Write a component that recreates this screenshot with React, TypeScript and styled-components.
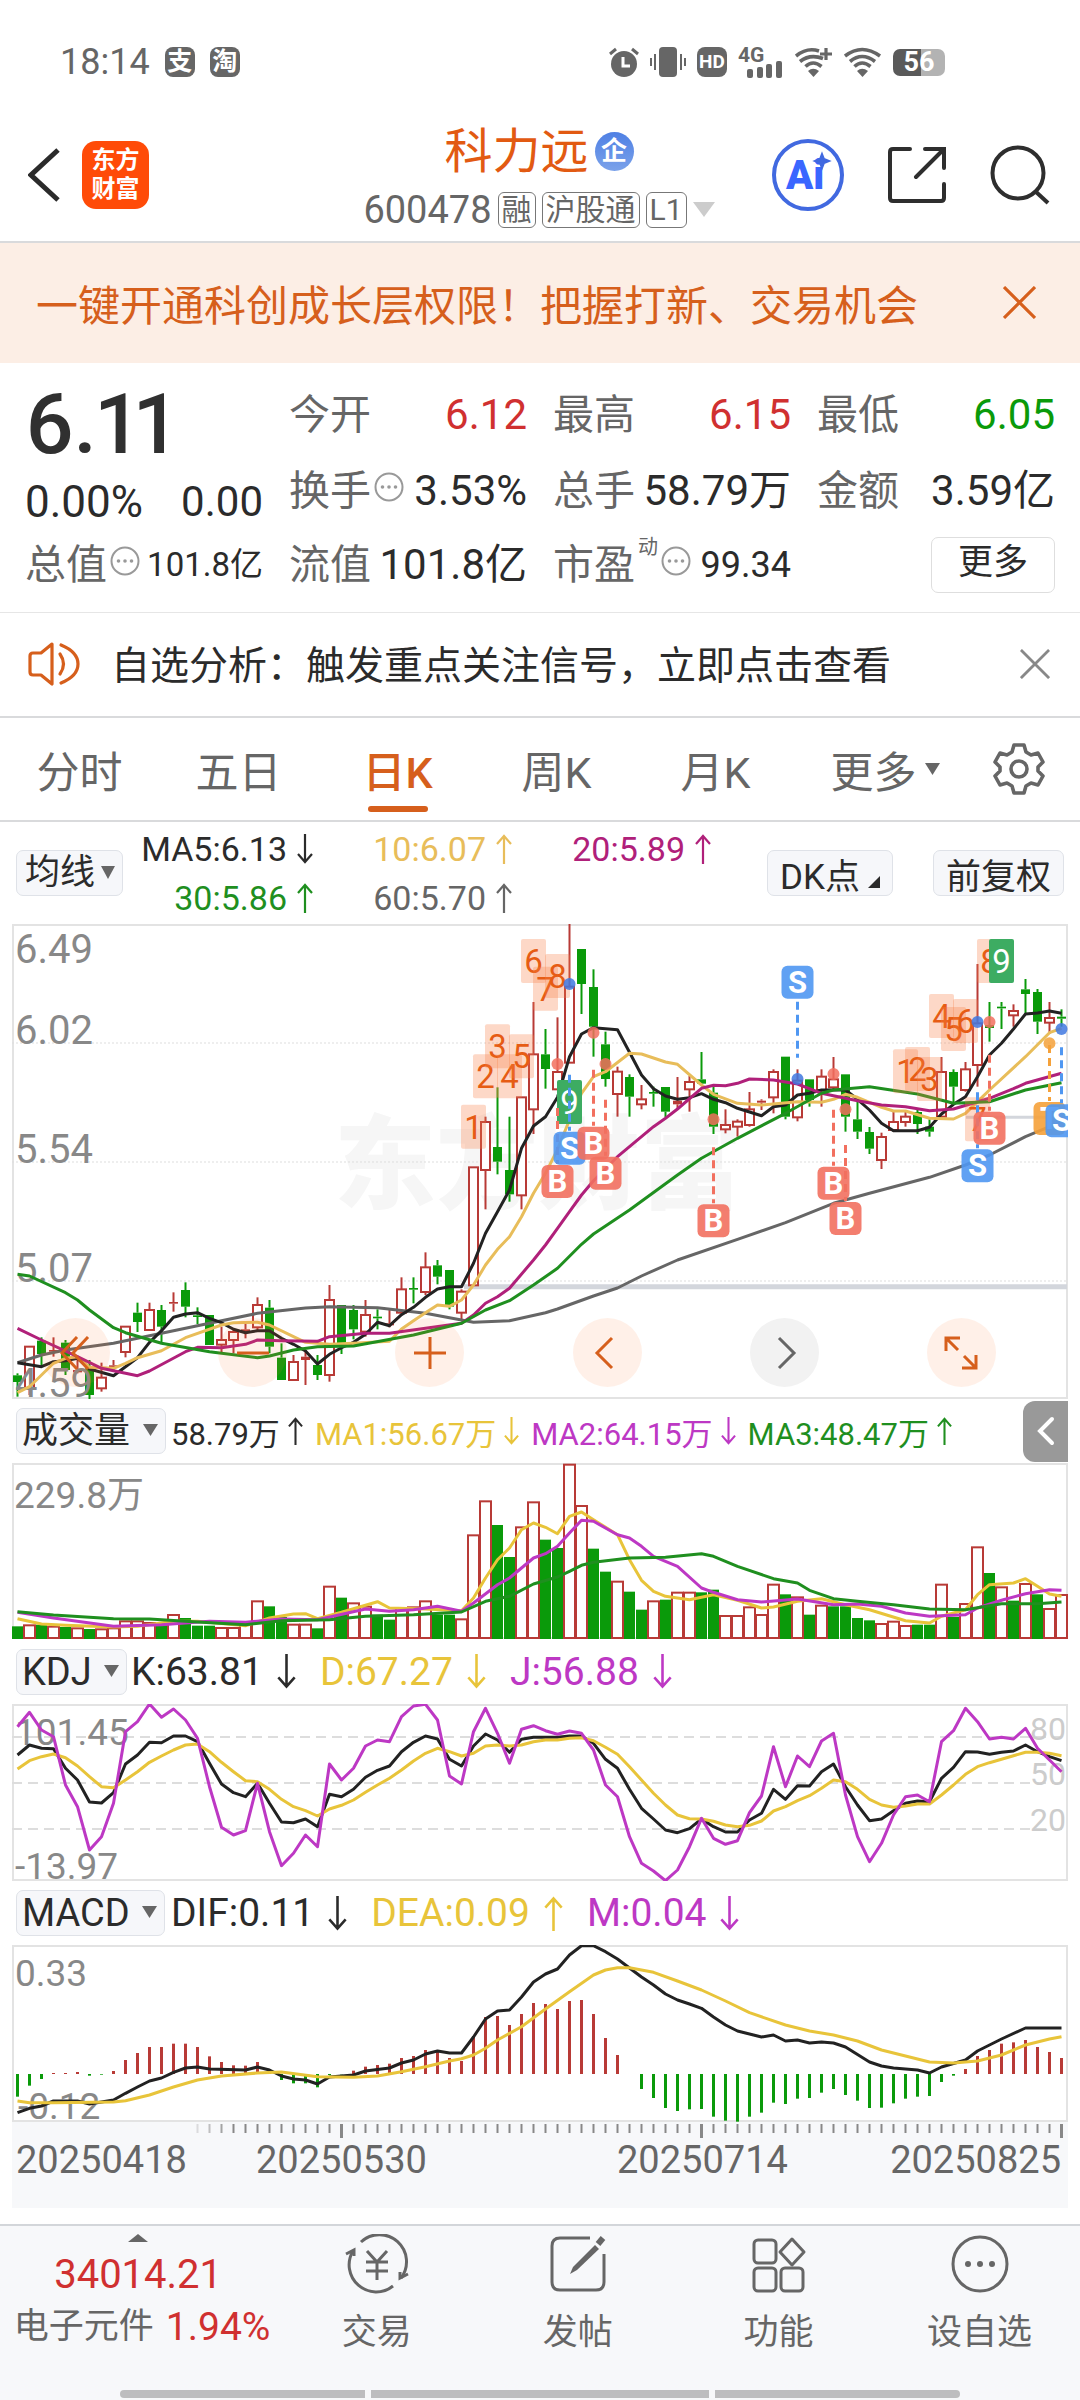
import React from "react";
import styled, { createGlobalStyle } from "styled-components";

const FONT = `Roboto, "Noto Sans CJK SC", sans-serif`;
const C = {
  ink: "#2b2b2b",
  grey: "#666666",
  soft: "#888888",
  line: "#d9dadc",
  orange: "#d65f1c",
  red: "#d03030",
  candleRed: "#b83a36",
  green: "#0a9a0a",
  maGreen: "#1f8f1f",
  gold: "#e8bd5a",
  yellow: "#e8c43a",
  magenta: "#b0207a",
  violet: "#bd38c4",
  chip: "#f6f7fa",
};

const Global = createGlobalStyle`
  *, *::before, *::after { box-sizing: border-box; }
  body { margin: 0; background: #fff; font-family: ${FONT}; color: ${C.ink}; }
  button, select { font: inherit; color: inherit; margin: 0; padding: 0; border: 0; background: none; }
  svg { display: block; flex: none; }
  p, h1 { margin: 0; font-weight: 400; }
`;

const Page = styled.div`
  display: flex;
  flex-direction: column;
  min-height: 100vh;
  white-space: nowrap;
`;

/* ---------- status bar ---------- */
const StatusBar = styled.div`
  display: flex;
  align-items: center;
  justify-content: space-between;
  height: 108px;
  padding: 16px 135px 0 60px;
  color: ${C.grey};
  font-size: 36px;
`;
const StatusGroup = styled.div<{ $gap: number }>`
  display: flex;
  align-items: center;
  gap: ${(p) => p.$gap}px;
`;
const AppDot = styled.span`
  display: grid;
  place-items: center;
  width: 30px;
  height: 30px;
  border-radius: 8px;
  background: ${C.grey};
  color: #fff;
  font-size: 25px;
  line-height: 30px;
  font-weight: 700;
`;
const HdBadge = styled(AppDot)`
  font-size: 19px;
`;
const Battery = styled.span`
  display: grid;
  place-items: center;
  width: 52px;
  height: 27px;
  border-radius: 7px;
  background: linear-gradient(90deg, #5a5a5a 54%, #b3b3b3 54%);
  color: #fff;
  font-size: 27px;
  line-height: 27px;
  font-weight: 700;
`;

/* ---------- header ---------- */
const Header = styled.header`
  display: grid;
  grid-template-columns: 1fr auto 1fr;
  align-items: center;
  height: 135px;
  padding: 0 30px 0 28px;
  border-bottom: 2px solid ${C.line};
`;
const HeaderSide = styled.div<{ $end?: boolean }>`
  display: flex;
  align-items: center;
  gap: ${(p) => (p.$end ? 44 : 22)}px;
  justify-content: ${(p) => (p.$end ? "flex-end" : "flex-start")};
`;
const Logo = styled.div`
  display: grid;
  place-content: center;
  width: 67px;
  height: 68px;
  border-radius: 14px;
  background: #ff4b08;
  color: #fff;
  font-size: 24px;
  line-height: 29px;
  font-weight: 700;
`;
const TitleCol = styled.div`
  display: flex;
  flex-direction: column;
  align-items: center;
  gap: 8px;
  padding-top: 6px;
`;
const TitleRow = styled.div`
  display: flex;
  align-items: center;
  gap: 6px;
`;
const StockName = styled.h1`
  font-size: 48px;
  line-height: 56px;
  color: #e25a12;
`;
const EntBadge = styled.span`
  display: grid;
  place-items: center;
  width: 39px;
  height: 39px;
  border-radius: 50%;
  background: linear-gradient(#4f80e4, #7ba2ea);
  color: #fff;
  font-size: 26px;
  line-height: 39px;
  font-weight: 700;
`;
const CodeRow = styled.div`
  display: flex;
  align-items: center;
  gap: 6px;
  font-size: 38px;
  line-height: 44px;
  color: ${C.grey};
`;
const Tag = styled.span`
  padding: 0 3px;
  border: 1px solid #777;
  border-radius: 6px;
  font-size: 30px;
  line-height: 34px;
`;
const IconButton = styled.button`
  display: grid;
  place-items: center;
`;

/* ---------- promo banner ---------- */
const Banner = styled.section`
  display: flex;
  align-items: center;
  justify-content: space-between;
  height: 120px;
  padding: 0 44px 2px 36px;
  background: #fceee5;
  color: ${C.orange};
  font-size: 42px;
`;

/* ---------- quote ---------- */
const Quote = styled.section`
  display: grid;
  grid-template-columns: repeat(4, minmax(0, 1fr));
  grid-template-rows: 76px 76px 72px;
  column-gap: 26px;
  align-items: center;
  padding: 14px 25px 11px;
  border-bottom: 1px solid #e6e6e6;
`;
const PriceCell = styled.div`
  display: flex;
  flex-direction: column;
  grid-row: span 2;
`;
const Price = styled.strong`
  font-size: 84px;
  line-height: 98px;
  font-weight: 500;
  font-variant-numeric: proportional-nums;
  color: #303030;
`;
const Pair = styled.div`
  display: flex;
  align-items: center;
  justify-content: space-between;
  font-size: 42px;
  line-height: 56px;
`;
const Label = styled.span`
  display: flex;
  align-items: center;
  gap: 3px;
  color: ${C.grey};
  font-size: 41px;
`;
const Sup = styled.sup`
  align-self: flex-start;
  font-size: 20px;
  line-height: 20px;
  vertical-align: baseline;
`;
const Value = styled.span<{ $color?: string; $size?: number }>`
  color: ${(p) => p.$color ?? C.ink};
  font-size: ${(p) => p.$size ?? 42}px;
`;
const InfoIcon = styled.svg`
  margin-bottom: 8px;
`;
const MoreButton = styled.button`
  justify-self: end;
  width: 124px;
  height: 56px;
  padding-bottom: 4px;
  border: 1px solid #dedede;
  border-radius: 7px;
  font-size: 35px;
  line-height: 50px;
`;

/* ---------- notice ---------- */
const Notice = styled.section`
  display: flex;
  align-items: center;
  height: 105px;
  padding: 0 30px 2px 28px;
  border-bottom: 2px solid ${C.line};
  font-size: 39px;
`;
const NoticeText = styled.p`
  flex: 1;
  padding: 0 0 4px 30px;
`;

/* ---------- tabs ---------- */
const Tabs = styled.nav`
  display: grid;
  grid-template-columns: repeat(5, 53fr) 60fr 35fr;
  height: 104px;
  border-bottom: 2px solid ${C.line};
`;
const Tab = styled.button<{ $active?: boolean }>`
  display: flex;
  align-items: center;
  justify-content: center;
  gap: 8px;
  position: relative;
  font-size: 43px;
  font-weight: ${(p) => (p.$active ? 500 : 400)};
  color: ${(p) => (p.$active ? C.orange : C.grey)};
  &::after {
    content: "";
    display: ${(p) => (p.$active ? "block" : "none")};
    position: absolute;
    bottom: 8px;
    width: 60px;
    height: 6px;
    border-radius: 3px;
    background: ${C.orange};
  }
`;
const GearTab = styled(Tab)`
  justify-content: flex-start;
  padding-left: 18px;
`;

/* ---------- indicator rows ---------- */
const MaRow = styled.div`
  display: flex;
  align-items: center;
  justify-content: space-between;
  height: 102px;
  padding: 0 16px;
`;
const MaGrid = styled.div`
  display: grid;
  grid-template-columns: 190px 199px 199px;
  grid-auto-rows: 49px;
  justify-items: end;
  flex: 1;
`;
const Reading = styled.span<{ $color: string; $size: number; $gap?: number }>`
  display: flex;
  align-items: center;
  gap: ${(p) => p.$gap ?? 10}px;
  color: ${(p) => p.$color};
  font-size: ${(p) => p.$size}px;
`;
const ChipButton = styled.button`
  display: flex;
  align-items: center;
  gap: 8px;
  height: 46px;
  padding: 0 12px;
  border: 1px solid #dfe2e8;
  border-radius: 7px;
  background: ${C.chip};
  font-size: 35px;
`;
const ChipGroup = styled.div`
  display: flex;
  gap: 40px;
`;
const SelectWrap = styled.label`
  position: relative;
  display: block;
  svg {
    position: absolute;
    right: 8px;
    top: 16px;
    pointer-events: none;
  }
`;
const Select = styled.select<{ $tight?: boolean; $size?: number }>`
  appearance: none;
  display: block;
  height: 46px;
  padding: 0 ${(p) => (p.$tight ? 26 : 34)}px 0 ${(p) => (p.$tight ? 8 : 5)}px;
  border: 1px solid #dfe2e8;
  border-radius: 7px;
  background: ${C.chip};
  font-size: ${(p) => p.$size ?? 36}px;
  line-height: 44px;
`;
const IndicatorRow = styled.div<{ $gap: number; $height: number }>`
  display: flex;
  align-items: center;
  gap: ${(p) => p.$gap}px;
  height: ${(p) => p.$height}px;
  padding-left: 16px;
  margin-right: 12px;
`;
const Readings = styled.div<{ $gap: number }>`
  display: flex;
  flex: 1;
  gap: ${(p) => p.$gap}px;
`;
const CollapseTab = styled.button`
  display: grid;
  place-items: center;
  width: 45px;
  height: 61px;
  border-radius: 12px 0 0 12px;
  background: #999;
`;

/* ---------- charts ---------- */
const Plot = styled.div`
  position: relative;
  margin: 0 12px;
`;
const ChartSvg = styled.svg`
  width: 100%;
  height: auto;
  font-family: ${FONT};
`;
const PlotControls = styled.div`
  position: absolute;
  left: 29px;
  right: 72px;
  bottom: 12px;
  display: flex;
  justify-content: space-between;
`;
const RoundButton = styled.button<{ $muted?: boolean }>`
  display: grid;
  place-items: center;
  width: 69px;
  height: 69px;
  border-radius: 50%;
  background: ${(p) => (p.$muted ? "#f2f2f2" : "rgba(255, 120, 50, 0.11)")};
  color: ${(p) => (p.$muted ? C.grey : C.orange)};
`;
const Axis = styled(Plot)`
  background: #f7f8fa;
`;

/* ---------- bottom bar ---------- */
const BottomBar = styled.footer`
  display: flex;
  flex-direction: column;
  flex: 1;
  margin-top: 16px;
  border-top: 2px solid #d3d6da;
  background: #f7f8fa;
`;
const BottomGrid = styled.div`
  display: grid;
  grid-template-columns: 11fr 8fr 8fr 8fr 8fr;
  flex: 1;
  color: ${C.grey};
`;
const NavButton = styled.button`
  display: flex;
  flex-direction: column;
  align-items: center;
  padding-top: 8px;
  gap: 14px;
  font-size: 35px;
  line-height: 50px;
`;
const IndexButton = styled(NavButton)`
  gap: 9px;
`;
const IndexValue = styled.span`
  color: ${C.red};
  font-size: 40px;
  line-height: 48px;
`;
const IndexLine = styled.span`
  display: flex;
  align-items: center;
  gap: 12px;
  padding-left: 8px;
  line-height: 38px;
  font-size: 35px;
`;
const HomeBar = styled.div`
  display: grid;
  grid-template-columns: 8fr 11fr 8fr;
  gap: 6px;
  padding: 0 120px 2px;
`;
const HomeSegment = styled.span<{ $radius: string }>`
  height: 8px;
  border-radius: ${(p) => p.$radius};
  background: #bdbdbf;
`;

/* ---------- small drawings ---------- */
const Arrow = ({ up, w = 16, h = 30 }: { up?: boolean; w?: number; h?: number }) => (
  <svg width={w} height={h} viewBox="0 0 16 30" fill="none" stroke="currentColor" strokeWidth="2.2">
    {up ? <path d="M8 30V2M1 10L8 2l7 8" /> : <path d="M8 0v28M1 20l7 8 7-8" />}
  </svg>
);
const Caret = ({ w = 15, h = 12, color = C.grey }: { w?: number; h?: number; color?: string }) => (
  <svg width={w} height={h} viewBox="0 0 15 12" preserveAspectRatio="none">
    <path d="M0 0h15L7.5 12z" fill={color} />
  </svg>
);
const Cross = ({ size, color }: { size: number; color: string }) => (
  <svg width={size} height={size} viewBox="0 0 32 32" fill="none" stroke={color} strokeWidth="3">
    <path d="M1 1l30 30M31 1L1 31" />
  </svg>
);
const Info = () => (
  <InfoIcon width="30" height="30" viewBox="0 0 30 30" fill="none" stroke="#999" strokeWidth="2">
    <circle cx="15" cy="15" r="13.5" />
    <g fill="#999" stroke="none">
      <circle cx="8.5" cy="15" r="1.8" />
      <circle cx="15" cy="15" r="1.8" />
      <circle cx="21.5" cy="15" r="1.8" />
    </g>
  </InfoIcon>
);
const Wifi = ({ plus }: { plus?: boolean }) => (
  <svg width="38" height="30" viewBox="0 0 38 30" fill="none" stroke={C.grey} strokeWidth="3.6">
    <path d={plus ? "M1 9Q12 0 24 4" : "M1 9Q18 -4 36 9"} />
    <path d={plus ? "M5 14.500Q15 6.500 28 11.500" : "M6 14.500Q18 4.500 31 14.500"} />
    <path d="M10.500 19.500Q18 12.500 26.500 19.500" />
    <path d="M13 24Q18 19.500 24 24L18.500 30z" fill={C.grey} stroke="none" />
    {plus && <path d="M31 1v12M25 7h12" strokeWidth="3.2" />}
  </svg>
);

/* ---------- chart data ---------- */
type Point = [number, number];
const STEP = 12;
const xAt = (i: number) => 5.5 + i * STEP;
const COUNT = 88;

const parse = (s: string): Point[] =>
  s.split(" ").map((p) => p.split(":").map(Number) as Point);
const toPath = (s: string, top: number) =>
  parse(s).map(([i, v]) => `${xAt(i)},${((v - top) / 3).toFixed(1)}`).join(" ");

// direction, high, body top, body bottom, low
const CANDLES = `g1390,1396,1416,1460 r1310,1310,1435,1455 g1282,1292,1332,1370 r1282,1320,1325,1340 g1290,1298,1380,1395
r1340,1380,1387,1390 g1350,1375,1455,1468 r1358,1403,1435,1445 r1350,1366,1372,1380 r1250,1250,1326,1342
g1178,1208,1236,1266 r1178,1200,1260,1260 g1185,1200,1250,1296 r1147,1176,1181,1205 g1117,1140,1190,1222
g1192,1216,1221,1242 g1215,1215,1305,1305 r1250,1290,1304,1330 r1255,1266,1290,1330 r1240,1258,1264,1285
r1162,1185,1252,1260 g1170,1193,1310,1330 g1300,1343,1410,1410 r1335,1356,1410,1410 r1320,1340,1350,1425
g1335,1365,1395,1410 r1125,1170,1395,1415 g1185,1185,1310,1332 g1185,1200,1258,1288 r1170,1215,1265,1280
g1198,1220,1225,1258 r1200,1240,1246,1252 r1102,1138,1208,1210 g1102,1134,1139,1180 r1027,1072,1146,1155
g1050,1066,1100,1123 g1080,1080,1190,1198 r1138,1145,1208,1228 r772,772,1126,1126 r620,636,780,898
g532,711,755,793 g620,780,853,875 r562,562,856,898 r276,433,598,672 g357,433,477,536
r322,486,538,540 r42,230,458,458 g117,117,222,312 g178,231,350,440 g365,403,507,530
r470,485,552,620 g493,501,560,620 r525,568,583,598 g530,546,551,590 g531,531,605,622
r501,572,583,598 r498,516,538,605 g426,508,521,521 g531,548,650,672 r598,645,658,670
r628,635,650,680 r546,598,645,650 r568,572,578,600 r478,486,562,610 g440,440,620,628
r478,512,622,634 g508,508,570,590 r478,500,540,590 r441,508,532,540 g493,493,620,665
g575,628,665,687 g651,666,716,732 r668,681,750,777 r605,636,660,665 r600,620,636,650
g598,606,642,672 g628,650,665,680 r441,486,620,622 g478,486,530,582 r456,478,540,545
r162,340,465,530 g276,345,354,395 g276,290,295,357 r283,303,316,350 g207,238,252,310
g237,246,335,372 r276,324,338,372 g298,320,326,350`
  .split(/\s+/)
  .map((t) => ({ up: t[0] === "r", v: t.slice(1).split(",").map(Number) }));

const MA5 =
  "0:1358 2:1370 3:1355 4:1352 5:1345 6:1377 8:1397 9:1370 10:1343 11:1297 12:1262 13:1222 14:1212 15:1208 16:1225 17:1238 18:1258 19:1268 20:1262 21:1262 22:1285 23:1303 24:1323 25:1362 26:1333 27:1313 28:1297 29:1273 30:1237 31:1247 32:1214 33:1192 34:1162 35:1137 36:1130 37:1130 38:1060 39:970 40:905 41:840 42:715 43:648 44:620 45:562 46:440 47:372 48:353 50:359 51:427 52:495 53:536 54:558 55:568 56:563 57:551 58:568 59:578 60:595 62:617 63:590 64:585 65:555 66:550 67:540 69:540 70:568 71:600 72:640 73:662 75:662 76:652 77:612 78:583 79:560 80:500 81:435 82:400 83:357 84:312 85:309 86:303 87:310";
const MA10 =
  "0:1448 1:1430 2:1395 3:1360 4:1345 5:1340 6:1372 8:1375 9:1360 10:1343 12:1322 14:1283 17:1245 18:1238 20:1237 21:1245 23:1280 24:1297 26:1303 28:1300 31:1294 32:1257 33:1232 34:1208 35:1185 36:1189 37:1170 38:1125 39:1065 40:1018 41:980 42:920 43:850 44:790 45:718 46:630 47:550 48:500 49:485 51:430 52:432 54:456 55:463 57:525 58:553 60:580 62:585 65:575 67:577 68:568 69:553 70:562 72:592 73:603 74:603 76:625 78:627 79:610 80:575 81:540 84:440 86:368 87:355";
const MA20 =
  "0:1255 2:1290 5:1340 7:1375 10:1397 11:1383 14:1325 15:1312 17:1313 19:1303 20:1290 22:1292 25:1294 26:1280 29:1270 31:1270 34:1255 37:1240 38:1215 39:1180 40:1160 41:1135 43:1050 44:1005 45:955 46:905 47:855 48:812 50:740 53:650 54:625 55:597 57:535 58:526 59:527 60:520 61:507 63:510 65:522 67:550 70:572 72:585 74:590 76:602 78:597 81:565 83:536 84:520 87:490";
const MA30 =
  "0:1093 1:1098 4:1148 5:1170 6:1200 8:1253 9:1268 12:1300 16:1325 20:1343 21:1338 23:1320 25:1310 28:1308 33:1275 37:1240 39:1200 41:1172 43:1125 45:1075 47:1003 48:972 51:900 55:795 57:745 60:685 64:610 67:550 68:540 71:530 75:552 78:580 81:575 84:540 87:518";
const MA60 =
  "0:1358 2:1335 4:1320 8:1300 12:1270 16:1240 20:1210 24:1194 26:1190 30:1193 34:1210 38:1237 41:1232 44:1208 45:1197 48:1158 50:1134 52:1098 55:1050 60:988 64:938 68:880 71:850 76:802 79:765 81:735 84:680 87:635";

// index, box top, digit
const NINE_TURNS: [number, number, string][] = [
  [38, 584, "1"], [39, 433, "2"], [40, 343, "3"], [41, 433, "4"], [42, 373, "5"], [43, 87, "6"],
  [44, 170, "7"], [45, 132, "8"], [46, 510, "9"], [74, 418, "1"], [75, 411, "2"], [76, 441, "3"],
  [77, 252, "4"], [78, 291, "5"], [79, 267, "6"], [80, 562, "7"], [81, 87, "8"], [82, 87, "9"],
];
// index, dot y, badge top, letter
const SIGNALS: [number, number, number, "B" | "S" | "T"][] = [
  [45, 462, 765, "B"], [46, 222, 665, "S"], [48, 368, 650, "B"], [49, 462, 740, "B"],
  [58, 628, 883, "B"], [65, 507, 167, "S"], [68, 492, 770, "B"], [69, 598, 876, "B"],
  [80, 336, 718, "S"], [81, 336, 605, "B"], [86, 400, 576, "T"], [87, 357, 583, "S"],
];
const SIGNAL_COLOR = { B: "#f2705f", S: "#4f97f2", T: "#f5a13a" };

const VOLUMES =
  "g710 r704 g705 r708 g712 r713 g718 r716 r713 r692 r692 r697 g700 r673 g685 g708 g708 r712 r712 r700 r632 g650 g682 r702 r702 g716 r588 g624 r638 r648 g675 g690 r652 r650 r632 g675 g675 r686 r434 r332 g406 g502 r410 r335 g450 g475 r222 r346 g477 g546 r573 g606 g660 r632 g630 r606 r606 g608 g600 r676 r676 r650 r673 r582 g614 r620 g675 r645 g650 g650 g685 g692 r700 r693 r706 g705 g705 r582 g682 r640 r470 g550 r590 g633 r580 g614 r655 r613".split(" ");
const VMA1 =
  "0:687 2:703 4:707 8:712 10:710 13:695 15:695 19:708 21:685 23:673 24:672 25:687 27:668 30:636 31:655 34:658 37:663 38:625 39:565 40:510 41:475 42:420 43:400 44:413 45:432 46:380 47:367 48:390 50:435 51:510 52:572 53:605 54:620 56:630 58:615 60:632 62:655 63:652 65:635 67:627 69:645 71:660 74:693 76:700 77:680 79:660 80:615 81:585 83:580 84:567 85:590 86:613 87:620";
const VMA2 =
  "0:668 3:685 8:710 12:705 16:695 19:698 22:688 25:690 29:658 31:665 33:660 35:650 37:665 38:640 40:585 41:565 43:505 44:492 45:470 46:430 47:392 48:395 50:435 51:445 52:470 53:500 55:530 57:595 58:608 60:630 62:637 65:628 68:645 70:643 72:650 74:670 76:680 79:675 80:655 82:632 84:612 86:600 87:602";
const VMA3 =
  "0:666 3:676 8:687 11:688 15:697 19:705 22:693 26:690 29:680 33:675 37:667 39:635 41:620 43:583 45:562 46:545 47:527 48:518 51:505 54:503 57:492 58:500 60:530 63:567 65:580 66:602 68:627 70:635 73:645 76:658 79:660 82:642 85:642 87:637";

const indexed = (s: string) => s.split(" ").map((v, i) => `${i}:${v}`).join(" ");
const KDJ_J = indexed(
  "110 67 120 140 285 350 480 440 340 125 95 42 82 57 90 145 290 412 435 422 280 425 527 490 435 470 222 270 235 168 150 155 80 48 43 90 258 282 125 55 130 220 118 107 122 133 123 130 180 285 320 440 520 543 572 540 470 385 445 463 452 368 318 170 290 198 230 153 130 315 440 515 460 375 320 315 335 155 122 55 95 147 142 147 115 175 210 245"
);
const KDJ_K = indexed(
  "195 165 175 176 235 270 336 339 308 222 195 157 158 138 138 155 220 282 308 320 280 340 396 398 387 410 313 320 298 262 241 228 185 157 138 147 208 228 168 132 150 187 148 142 142 142 138 138 160 208 235 298 355 387 420 428 416 387 410 426 426 390 370 298 328 287 288 245 222 290 345 392 387 362 340 333 335 265 232 185 186 193 187 183 165 185 200 212"
);
const KDJ_D = indexed(
  "237 212 200 192 203 228 260 290 293 270 245 217 198 180 165 162 185 217 245 272 275 298 328 350 362 378 357 346 330 307 285 265 240 213 190 175 185 198 190 168 165 168 165 155 150 150 145 143 152 172 193 230 270 310 345 375 386 387 394 405 410 406 393 363 350 332 317 295 270 275 298 328 345 352 348 342 342 315 285 253 230 218 208 197 187 187 190 197"
);

const MACD_BARS =
  "650 617 597 579 579 576 587 584 573 540 519 501 501 491 491 501 529 546 556 557 546 570 600 610 610 622 585 583 572 560 555 551 534 528 510 510 534 543 471 411 408 435 402 369 372 387 363 360 402 474 525 582 627 654 684 693 688 687 710 722 725 710 698 668 672 656 654 638 627 645 662 684 683 670 656 650 648 606 587 567 528 510 491 487 480 501 516 534"
    .split(" ")
    .map(Number);
const DIF =
  "0:698 1:685 2:678 3:663 5:663 6:672 8:660 9:640 10:621 11:603 12:594 13:577 14:564 15:561 16:567 19:570 20:561 21:570 22:588 23:597 24:600 25:612 26:591 28:585 29:573 31:564 32:549 33:540 34:522 35:513 36:519 37:519 38:471 39:417 40:393 41:390 42:351 43:306 44:282 45:267 46:225 47:197 48:197 49:215 50:237 51:264 52:291 53:315 54:342 55:360 56:372 57:385 58:411 59:435 60:453 61:462 62:471 63:465 64:483 65:480 66:489 67:486 68:489 69:501 71:546 72:558 73:564 75:570 76:579 77:561 79:540 80:513 81:495 82:477 84:444 87:444";
const DEA =
  "0:663 1:668 3:668 8:666 9:662 11:645 13:621 15:600 17:588 20:579 22:576 25:590 28:592 30:588 32:575 34:560 36:543 37:536 38:525 39:505 40:480 42:440 44:387 46:335 48:285 49:270 50:263 51:263 53:277 55:303 57:330 59:363 61:398 64:435 66:453 68:465 70:483 72:510 74:528 76:546 78:549 80:543 82:525 84:495 86:477 87:470";

const Line = ({ data, top, color }: { data: string; top: number; color: string }) => (
  <polyline points={toPath(data, top)} fill="none" stroke={color} strokeWidth="3" strokeLinejoin="round" />
);
const Frame = ({ h }: { h: number }) => (
  <rect x="1" y="1" width="1054" height={h - 2} fill="none" stroke="#e3e3e3" strokeWidth="2" />
);

function KLineChart() {
  const y = (v: number) => (v - 42) / 3;
  return (
    <ChartSvg viewBox="0 0 1056 475" role="img" aria-label="日K">
      <text x="322" y="277" fontSize="102" fontWeight="900" fill="#f6f6f6">东方财富</text>
      <Frame h={475} />
      {[119, 238, 357].map((g) => (
        <line key={g} x1="0" x2="1056" y1={g} y2={g} stroke="#ddd" strokeDasharray="2 2" />
      ))}
      <line x1="452" x2="1055" y1={y(1130)} y2={y(1130)} stroke="#d3d6dc" strokeWidth="5" />
      <line x1="954" x2="1050" y1={y(622)} y2={y(622)} stroke="#d3d6dc" strokeWidth="3" />
      {CANDLES.map(({ up, v }, i) => {
        const [hi, top, bottom, lo] = v.map(y);
        const x = xAt(i);
        const color = up ? C.candleRed : C.green;
        const hollow = up && bottom - top > 4;
        return (
          <g key={i} stroke={color} strokeWidth="2">
            <line x1={x} x2={x} y1={hi} y2={top} />
            <line x1={x} x2={x} y1={bottom} y2={lo} />
            {hollow ? (
              <rect x={x - 4.5} y={top} width="9" height={bottom - top} fill="#fff" />
            ) : (
              <rect x={x - 4.5} y={top} width="9" height={bottom - top} fill={color} stroke="none" />
            )}
          </g>
        );
      })}
      <g fontSize="40" fill={C.soft}>
        <text x="3" y="39">6.49</text>
        <text x="3" y="120">6.02</text>
        <text x="3" y="239">5.54</text>
        <text x="3" y="358">5.07</text>
        <text x="3" y="473">4.59</text>
      </g>
      <Line data={MA60} top={42} color="#666" />
      <Line data={MA5} top={42} color="#222" />
      <Line data={MA10} top={42} color={C.gold} />
      <Line data={MA20} top={42} color={C.magenta} />
      <Line data={MA30} top={42} color={C.maGreen} />
      {NINE_TURNS.map(([i, top, d]) => (
        <g key={`${i}${d}`}>
          <rect
            x={xAt(i) - 12.5}
            y={y(top)}
            width="25"
            height="44"
            rx="2"
            fill={d === "9" ? "#3dac62" : "rgba(250, 125, 70, 0.3)"}
          />
          <text x={xAt(i)} y={y(top) + 34} fontSize="33" textAnchor="middle" fill={d === "9" ? "#fff" : "#e65c14"}>
            {d}
          </text>
        </g>
      ))}
      {SIGNALS.map(([i, dot, top, kind]) => {
        const x = xAt(i);
        const color = SIGNAL_COLOR[kind];
        const above = top < dot;
        const start = above ? y(top) + 36 : y(top) - 57;
        return (
          <g key={i}>
            <circle cx={x} cy={y(dot)} r="6" fill={kind === "S" ? "#3f78e0" : color} fillOpacity="0.85" />
            <line x1={x} x2={x} y1={start} y2={start + 56} stroke={color} strokeWidth="3" strokeDasharray="8 5" />
            <rect x={x - 16} y={y(top)} width="32" height="33" rx="6" fill={color} fillOpacity="0.9" />
            <text x={x} y={y(top) + 27} fontSize="31" fontWeight="700" textAnchor="middle" fill="#fff">
              {kind}
            </text>
          </g>
        );
      })}
    </ChartSvg>
  );
}

function VolumeChart() {
  return (
    <ChartSvg viewBox="0 0 1056 176" role="img" aria-label="成交量">
      <Frame h={176} />
      <text x="2" y="45" fontSize="37" fill={C.soft}>229.8万</text>
      {VOLUMES.map((t, i) => {
        const top = (Number(t.slice(1)) - 220) / 3;
        const up = t[0] === "r";
        return (
          <rect
            key={i}
            x={xAt(i) - 5.5}
            y={up ? top + 1 : top}
            width={11}
            height={up ? 174 - top : 176 - top}
            fill={up ? "#fff" : C.green}
            stroke={up ? C.candleRed : "none"}
            strokeWidth="2"
          />
        );
      })}
      <Line data={VMA1} top={220} color={C.yellow} />
      <Line data={VMA2} top={220} color={C.violet} />
      <Line data={VMA3} top={220} color={C.maGreen} />
    </ChartSvg>
  );
}

function KdjChart() {
  return (
    <ChartSvg viewBox="0 0 1056 177" role="img" aria-label="KDJ">
      <Frame h={177} />
      {[33, 79, 125].map((g) => (
        <line key={g} x1="0" x2="1056" y1={g} y2={g} stroke="#ddd" strokeWidth="2" strokeDasharray="10 6" />
      ))}
      <g fontSize="37" fill={C.soft}>
        <text x="3" y="41">101.45</text>
        <text x="3" y="175">-13.97</text>
      </g>
      <g fontSize="32" fill="#ccc" textAnchor="end">
        <text x="1054" y="36">80</text>
        <text x="1054" y="81">50</text>
        <text x="1054" y="127">20</text>
      </g>
      <Line data={KDJ_K} top={42} color="#222" />
      <Line data={KDJ_D} top={42} color={C.yellow} />
      <Line data={KDJ_J} top={42} color={C.violet} />
    </ChartSvg>
  );
}

function MacdChart() {
  return (
    <ChartSvg viewBox="0 0 1056 177" role="img" aria-label="MACD">
      <Frame h={177} />
      <g fontSize="37" fill={C.soft}>
        <text x="3" y="41">0.33</text>
        <text x="6" y="174">-0.12</text>
      </g>
      {MACD_BARS.map((v, i) => (
        <line
          key={i}
          x1={xAt(i)}
          x2={xAt(i)}
          y1={129}
          y2={(v - 195) / 3}
          stroke={v < 582 ? C.candleRed : C.green}
          strokeWidth="3"
        />
      ))}
      <Line data={DIF} top={195} color="#222" />
      <Line data={DEA} top={195} color={C.yellow} />
    </ChartSvg>
  );
}

function DateAxis() {
  return (
    <ChartSvg viewBox="0 0 1056 86" role="img" aria-label="日期">
      {Array.from({ length: COUNT - 15 }, (_, k) => k + 15).map((i) => {
        const major = i % 30 === 27;
        return (
          <line
            key={i}
            x1={xAt(i)}
            x2={xAt(i)}
            y1="2"
            y2={major ? 16 : 11}
            stroke="#888"
            strokeWidth={major ? 3 : 2}
            opacity={Math.min(1, (i - 14) / 4)}
          />
        );
      })}
      <g fontSize="38" fill={C.grey}>
        <text x="4" y="51">20250418</text>
        <text x="244" y="51">20250530</text>
        <text x="605" y="51">20250714</text>
        <text x="1049" y="51" textAnchor="end">20250825</text>
      </g>
    </ChartSvg>
  );
}

const stroke = { fill: "none", stroke: C.grey, strokeWidth: 3 } as const;

export default function App() {
  return (
    <Page>
      <Global />
      <StatusBar>
        <StatusGroup $gap={15}>
          <span>18:14</span>
          <AppDot>支</AppDot>
          <AppDot>淘</AppDot>
        </StatusGroup>
        <StatusGroup $gap={11}>
          <svg width="30" height="30" viewBox="0 0 30 30">
            <circle cx="15" cy="17" r="13" fill={C.grey} />
            <path d="M1 7l6-5M29 7l-6-5" stroke={C.grey} strokeWidth="3" />
            <path d="M14 10v9h7" fill="none" stroke="#fff" strokeWidth="3" />
          </svg>
          <svg width="36" height="30" viewBox="0 0 36 30">
            <rect x="9" y="0" width="18" height="30" rx="4" fill={C.grey} />
            <path d="M1 11v8M5 7v16M31 7v16M35 11v8" stroke={C.grey} strokeWidth="2" />
          </svg>
          <HdBadge>HD</HdBadge>
          <svg width="46" height="36" viewBox="0 0 46 36">
            <text x="0" y="18" fontSize="21" fontWeight="700" fill={C.grey} fontFamily="Roboto, sans-serif">4G</text>
            <g fill={C.grey}>
              <rect x="9" y="25" width="6" height="9" rx="2" />
              <rect x="19" y="23" width="6" height="11" rx="2" />
              <rect x="28" y="20" width="6" height="14" rx="2" />
              <rect x="38" y="17" width="6" height="17" rx="2" />
            </g>
          </svg>
          <Wifi plus />
          <Wifi />
          <Battery>56</Battery>
        </StatusGroup>
      </StatusBar>

      <Header>
        <HeaderSide>
          <IconButton aria-label="返回">
            <svg width="32" height="54" viewBox="0 0 32 54" fill="none" stroke="#2b2b2b" strokeWidth="5">
              <path d="M30 2L3 27l27 25" />
            </svg>
          </IconButton>
          <Logo>
            <span>东方</span>
            <span>财富</span>
          </Logo>
        </HeaderSide>
        <TitleCol>
          <TitleRow>
            <StockName>科力远</StockName>
            <EntBadge>企</EntBadge>
          </TitleRow>
          <CodeRow>
            <span>600478</span>
            <Tag>融</Tag>
            <Tag>沪股通</Tag>
            <Tag>L1</Tag>
            <Caret w={22} h={15} color="#ccc" />
          </CodeRow>
        </TitleCol>
        <HeaderSide $end>
          <IconButton aria-label="Ai">
            <svg width="72" height="72" viewBox="0 0 72 72">
              <circle cx="36" cy="36" r="34" fill="none" stroke="#4169e0" strokeWidth="4" />
              <text x="14" y="50" fontSize="40" fontWeight="900" fill="#3a66ff" fontFamily="Roboto, sans-serif">Ai</text>
              <path d="M50 15l2 5 5 2-5 2-2 5-2-5-5-2 5-2z" fill="#4169e0" stroke="#4169e0" strokeWidth="2" />
            </svg>
          </IconButton>
          <IconButton aria-label="分享">
            <svg width="58" height="58" viewBox="0 0 58 58" fill="none" stroke="#2e2e2e" strokeWidth="4" strokeLinecap="round">
              <path d="M22 3H5Q2 3 2 6v46q0 3 3 3h48q3 0 3-3V38" />
              <path d="M37 3h19v19M56 3L28 31" strokeLinejoin="miter" />
            </svg>
          </IconButton>
          <IconButton aria-label="搜索">
            <svg width="60" height="60" viewBox="0 0 60 60" fill="none" stroke="#2e2e2e" strokeWidth="4">
              <circle cx="28" cy="28" r="25.500" />
              <path d="M45 46l13 12" />
            </svg>
          </IconButton>
        </HeaderSide>
      </Header>

      <Banner>
        <span>一键开通科创成长层权限！把握打新、交易机会</span>
        <IconButton aria-label="关闭">
          <Cross size={33} color={C.orange} />
        </IconButton>
      </Banner>

      <Quote>
        <PriceCell>
          <Price>6.11</Price>
          <Pair>
            <Value $size={44}>0.00%</Value>
            <Value>0.00</Value>
          </Pair>
        </PriceCell>
        <Pair><Label>今开</Label><Value $color={C.red}>6.12</Value></Pair>
        <Pair><Label>最高</Label><Value $color={C.red}>6.15</Value></Pair>
        <Pair><Label>最低</Label><Value $color={C.green}>6.05</Value></Pair>
        <Pair><Label>换手<Info /></Label><Value>3.53%</Value></Pair>
        <Pair><Label>总手</Label><Value>58.79万</Value></Pair>
        <Pair><Label>金额</Label><Value>3.59亿</Value></Pair>
        <Pair><Label>总值<Info /></Label><Value $size={33}>101.8亿</Value></Pair>
        <Pair><Label>流值</Label><Value>101.8亿</Value></Pair>
        <Pair><Label>市盈<Sup>动</Sup><Info /></Label><Value $size={36}>99.34</Value></Pair>
        <MoreButton>更多</MoreButton>
      </Quote>

      <Notice>
        <svg width="53" height="44" viewBox="0 0 53 44" fill="none" stroke={C.orange} strokeWidth="3.200" strokeLinejoin="round" strokeLinecap="round">
          <path d="M24 2L13 11H5q-3 0-3 3v16q0 3 3 3h8l11 9z" />
          <path d="M32 12q7 10 0 20M33 3q17 7 17 19T33 41" />
        </svg>
        <NoticeText>自选分析：触发重点关注信号，立即点击查看</NoticeText>
        <IconButton aria-label="关闭">
          <Cross size={30} color="#888" />
        </IconButton>
      </Notice>

      <Tabs>
        <Tab>分时</Tab>
        <Tab>五日</Tab>
        <Tab $active>日K</Tab>
        <Tab>周K</Tab>
        <Tab>月K</Tab>
        <Tab>更多<Caret /></Tab>
        <GearTab aria-label="设置">
          <svg width="52" height="52" viewBox="0 0 52 52" fill="none" stroke={C.grey} strokeWidth="3.600" strokeLinejoin="round">
            <path d="M21 2h10l2 7 5 3 7-2 5 9-5 5v4l5 5-5 9-7-2-5 3-2 7H21l-2-7-5-3-7 2-5-9 5-5v-4l-5-5 5-9 7 2 5-3z" />
            <circle cx="26" cy="26" r="8" />
          </svg>
        </GearTab>
      </Tabs>

      <MaRow>
        <SelectWrap>
          <Select $tight $size={35} aria-label="主图指标">
            <option>均线</option>
          </Select>
          <Caret w={14} h={13} />
        </SelectWrap>
        <MaGrid>
          <Reading $color={C.ink} $size={34}>MA5:6.13<Arrow /></Reading>
          <Reading $color={C.gold} $size={34}>10:6.07<Arrow up /></Reading>
          <Reading $color={C.magenta} $size={34}>20:5.89<Arrow up /></Reading>
          <Reading $color={C.maGreen} $size={34}>30:5.86<Arrow up /></Reading>
          <Reading $color={C.grey} $size={34}>60:5.70<Arrow up /></Reading>
        </MaGrid>
        <ChipGroup>
          <ChipButton>
            DK点
            <svg width="12" height="30" viewBox="0 0 12 30">
              <path d="M12 18v12H0z" fill={C.ink} />
            </svg>
          </ChipButton>
          <ChipButton>前复权</ChipButton>
        </ChipGroup>
      </MaRow>

      <Plot>
        <KLineChart />
        <PlotControls>
          <RoundButton aria-label="快退">
            <svg width="34" height="34" viewBox="0 0 34 34" fill="none" stroke="currentColor" strokeWidth="3">
              <path d="M18 1L3 17l15 16M29 1L14 17l15 16" />
            </svg>
          </RoundButton>
          <RoundButton aria-label="缩小">
            <svg width="34" height="34" viewBox="0 0 34 34" stroke="currentColor" strokeWidth="3">
              <path d="M1 17h32" />
            </svg>
          </RoundButton>
          <RoundButton aria-label="放大">
            <svg width="34" height="34" viewBox="0 0 34 34" stroke="currentColor" strokeWidth="3">
              <path d="M1 17h32M17 1v32" />
            </svg>
          </RoundButton>
          <RoundButton aria-label="左移">
            <svg width="34" height="34" viewBox="0 0 34 34" fill="none" stroke="currentColor" strokeWidth="3">
              <path d="M22 2L7 17l15 15" />
            </svg>
          </RoundButton>
          <RoundButton $muted aria-label="右移">
            <svg width="34" height="34" viewBox="0 0 34 34" fill="none" stroke="currentColor" strokeWidth="3">
              <path d="M12 2l15 15-15 15" />
            </svg>
          </RoundButton>
          <RoundButton aria-label="全屏">
            <svg width="34" height="34" viewBox="0 0 34 34" fill="none" stroke="currentColor" strokeWidth="3">
              <path d="M2 15V2h14M2 2l12 12M32 19v13H18M32 32L20 20" />
            </svg>
          </RoundButton>
        </PlotControls>
      </Plot>

      <IndicatorRow $gap={5} $height={64}>
        <SelectWrap>
          <Select aria-label="副图指标一">
            <option>成交量</option>
          </Select>
          <Caret />
        </SelectWrap>
        <Readings $gap={12}>
          <Reading $color={C.ink} $size={31} $gap={8}>58.79万<Arrow up w={15} h={34} /></Reading>
          <Reading $color={C.yellow} $size={31} $gap={8}>MA1:56.67万<Arrow w={15} h={34} /></Reading>
          <Reading $color={C.violet} $size={31} $gap={8}>MA2:64.15万<Arrow w={15} h={34} /></Reading>
          <Reading $color={C.maGreen} $size={31} $gap={8}>MA3:48.47万<Arrow up w={15} h={34} /></Reading>
        </Readings>
        <CollapseTab aria-label="收起">
          <svg width="18" height="30" viewBox="0 0 18 30" fill="none" stroke="#fff" strokeWidth="4" strokeLinecap="round">
            <path d="M15 3L3 15l12 12" />
          </svg>
        </CollapseTab>
      </IndicatorRow>
      <Plot><VolumeChart /></Plot>

      <IndicatorRow $gap={4} $height={65}>
        <SelectWrap>
          <Select $size={38} aria-label="副图指标二">
            <option>KDJ</option>
          </Select>
          <Caret />
        </SelectWrap>
        <Readings $gap={24}>
          <Reading $color={C.ink} $size={39} $gap={14}>K:63.81<Arrow w={19} h={35} /></Reading>
          <Reading $color={C.yellow} $size={39} $gap={14}>D:67.27<Arrow w={19} h={35} /></Reading>
          <Reading $color={C.violet} $size={39} $gap={14}>J:56.88<Arrow w={19} h={35} /></Reading>
        </Readings>
      </IndicatorRow>
      <Plot><KdjChart /></Plot>

      <IndicatorRow $gap={6} $height={64}>
        <SelectWrap>
          <Select $size={38} aria-label="副图指标三">
            <option>MACD</option>
          </Select>
          <Caret />
        </SelectWrap>
        <Readings $gap={24}>
          <Reading $color={C.ink} $size={39} $gap={14}>DIF:0.11<Arrow w={19} h={35} /></Reading>
          <Reading $color={C.yellow} $size={39} $gap={14}>DEA:0.09<Arrow up w={19} h={35} /></Reading>
          <Reading $color={C.violet} $size={39} $gap={14}>M:0.04<Arrow w={19} h={35} /></Reading>
        </Readings>
      </IndicatorRow>
      <Plot><MacdChart /></Plot>
      <Axis><DateAxis /></Axis>

      <BottomBar>
        <BottomGrid>
          <IndexButton>
            <svg width="20" height="8" viewBox="0 0 20 8">
              <path d="M10 0l10 8H0z" fill={C.grey} />
            </svg>
            <IndexValue>34014.21</IndexValue>
            <IndexLine>
              电子元件
              <Value $color={C.red} $size={39}>1.94%</Value>
            </IndexLine>
          </IndexButton>
          <NavButton>
            <svg width="66" height="60" viewBox="0 0 66 60" {...stroke}>
              <path d="M17 8A27 27 0 0 1 57 44" />
              <path d="M49 52A27 27 0 0 1 9 17" />
              <path d="M2 20l8-4v6M64 40l-8 4v-6" />
              <path d="M23 17l10 11 10-11M22 28h22M22 37h22M33 28v18" />
            </svg>
            交易
          </NavButton>
          <NavButton>
            <svg width="60" height="60" viewBox="0 0 60 60" {...stroke}>
              <path d="M42 4H12q-8 0-8 8v36q0 8 8 8h36q8 0 8-8V20" />
              <path d="M25 33L47 11l4 4L29 36l-7 4z" fill={C.grey} stroke="none" />
              <path d="M50 10l5-6" strokeWidth="6" />
            </svg>
            发帖
          </NavButton>
          <NavButton>
            <svg width="60" height="60" viewBox="0 0 60 60" {...stroke} strokeLinejoin="round">
              <rect x="5" y="6" width="22" height="23" rx="4" />
              <rect x="5" y="34" width="22" height="23" rx="4" />
              <rect x="32" y="34" width="22" height="23" rx="4" />
              <path d="M43 5l12 13-12 13-12-13z" />
            </svg>
            功能
          </NavButton>
          <NavButton>
            <svg width="60" height="60" viewBox="0 0 60 60" {...stroke}>
              <circle cx="30" cy="30" r="27" />
              <g fill={C.grey} stroke="none">
                <circle cx="18" cy="30" r="3" />
                <circle cx="30" cy="30" r="3" />
                <circle cx="42" cy="30" r="3" />
              </g>
            </svg>
            设自选
          </NavButton>
        </BottomGrid>
        <HomeBar>
          <HomeSegment $radius="4px 0 0 4px" />
          <HomeSegment $radius="0" />
          <HomeSegment $radius="0 4px 4px 0" />
        </HomeBar>
      </BottomBar>
    </Page>
  );
}
